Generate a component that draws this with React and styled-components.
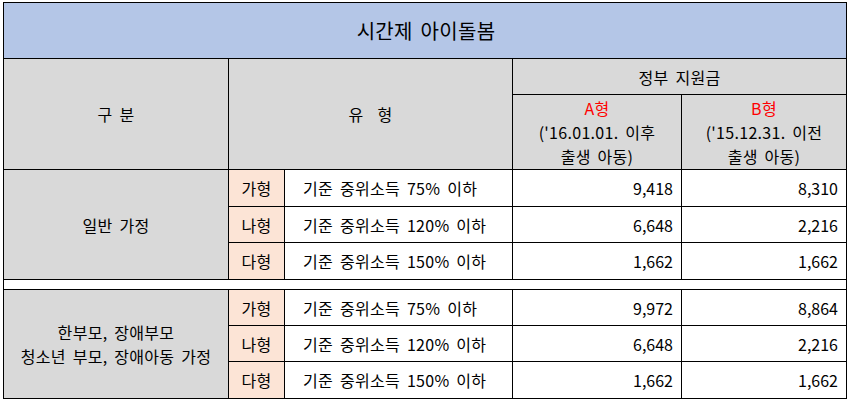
import React from "react";
import styled, { createGlobalStyle } from "styled-components";

const Global = createGlobalStyle`
  html, body { margin: 0; padding: 0; background: #fff; }
  body {
    font-family: "Noto Sans CJK KR", "Noto Sans", sans-serif;
    color: #000;
  }
`;

const Page = styled.div`
  padding: 2px 0 0 3px;
`;

const Grid = styled.div`
  display: grid;
  width: fit-content;
  grid-template-columns: 224px 55px 227px 168px 164px;
  grid-template-rows: 55px 35px 74px 36px 35px 36px 9px 35px 35px 36px;
  gap: 1px;
  padding: 1px;
  background: #000;
`;

const Cell = styled.div`
  grid-column: ${(p) => p.$col || "auto"};
  grid-row: ${(p) => p.$row || "auto"};
  background: ${(p) => p.$bg || "#fff"};
  display: flex;
  flex-direction: column;
  align-items: center;
  justify-content: center;
  text-align: center;
  font-size: 16px;
  line-height: 24px;
  word-spacing: 3px;
  letter-spacing: 0.3px;
  white-space: pre;
`;

const TitleCell = styled(Cell)`
  grid-column: 1 / -1;
  grid-row: 1;
  background: #b4c6e7;
  font-size: 20px;
  line-height: 28px;
  padding-left: 2px;
`;

const HeadCell = styled(Cell)`
  background: #d9d9d9;
`;

const Red = styled.span`
  color: #ff0000;
`;

const GradeCell = styled(Cell)`
  background: #fce4d6;
`;

const DescCell = styled(Cell)`
  align-items: flex-start;
  text-align: left;
  padding-left: 18px;
`;

const NumCell = styled(Cell)`
  align-items: flex-end;
  text-align: right;
  padding-right: 8px;
  letter-spacing: 0;
`;

const GapRow = styled.div`
  grid-column: 1 / -1;
  grid-row: 7;
  background: #fff;
`;

const grades = [
  { g: "가형", d: "기준 중위소득 75% 이하" },
  { g: "나형", d: "기준 중위소득 120% 이하" },
  { g: "다형", d: "기준 중위소득 150% 이하" },
];

const groups = [
  { label: "일반 가정", start: 4, vals: [["9,418", "8,310"], ["6,648", "2,216"], ["1,662", "1,662"]] },
  {
    label: "한부모, 장애부모\n청소년 부모, 장애아동 가정",
    start: 8,
    vals: [["9,972", "8,864"], ["6,648", "2,216"], ["1,662", "1,662"]],
  },
];

export default function App() {
  return (
    <>
      <Global />
      <Page>
        <Grid>
          <TitleCell>시간제 아이돌봄</TitleCell>
          <HeadCell $col="1" $row="2 / 4">구 분</HeadCell>
          <HeadCell $col="2 / 4" $row="2 / 4">유  형</HeadCell>
          <HeadCell $col="4 / 6" $row="2">정부 지원금</HeadCell>
          <HeadCell $col="4" $row="3">
            <Red>A형</Red>
            <span>('16.01.01. 이후</span>
            <span>출생 아동)</span>
          </HeadCell>
          <HeadCell $col="5" $row="3">
            <Red>B형</Red>
            <span>('15.12.31. 이전</span>
            <span>출생 아동)</span>
          </HeadCell>
          {groups.map((grp) => (
            <React.Fragment key={grp.start}>
              <HeadCell $col="1" $row={`${grp.start} / ${grp.start + 3}`}>
                {grp.label}
              </HeadCell>
              {grades.map((gr, i) => (
                <React.Fragment key={gr.g}>
                  <GradeCell $col="2" $row={`${grp.start + i}`}>{gr.g}</GradeCell>
                  <DescCell $col="3" $row={`${grp.start + i}`}>{gr.d}</DescCell>
                  <NumCell $col="4" $row={`${grp.start + i}`}>{grp.vals[i][0]}</NumCell>
                  <NumCell $col="5" $row={`${grp.start + i}`}>{grp.vals[i][1]}</NumCell>
                </React.Fragment>
              ))}
            </React.Fragment>
          ))}
          <GapRow />
        </Grid>
      </Page>
    </>
  );
}
